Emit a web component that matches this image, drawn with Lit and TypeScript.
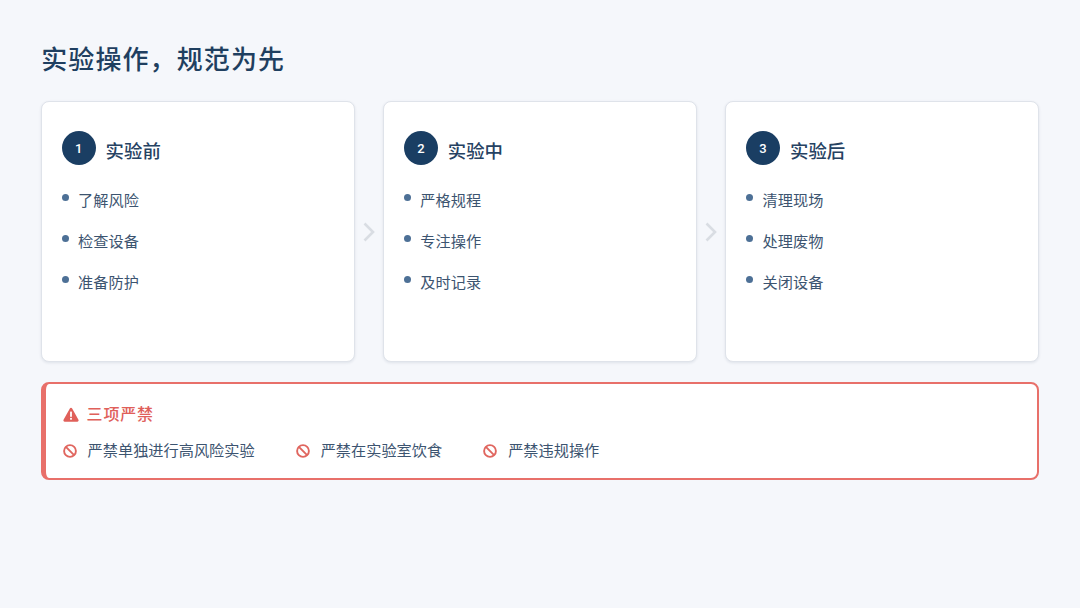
import { LitElement, html, css, svg } from "lit";
import { customElement } from "lit/decorators.js";

const cards = [
  { n: "1", title: "实验前", items: ["了解风险", "检查设备", "准备防护"] },
  { n: "2", title: "实验中", items: ["严格规程", "专注操作", "及时记录"] },
  { n: "3", title: "实验后", items: ["清理现场", "处理废物", "关闭设备"] },
];
const bans = ["严禁单独进行高风险实验", "严禁在实验室饮食", "严禁违规操作"];

const ban = svg`<circle cx="7" cy="7" r="5.9" fill="none" stroke="#e0665f" stroke-width="1.9"/><path d="M2.9 2.9 11.1 11.1" stroke="#e0665f" stroke-width="1.9"/>`;
const warn = svg`<path d="M8 .8c.5 0 .9.25 1.15.7l6.3 11.3c.5.9-.1 1.9-1.15 1.9H1.7c-1 0-1.65-1-1.15-1.9l6.3-11.3c.25-.45.65-.7 1.15-.7Z" fill="#e0605a"/><rect x="7.1" y="4.6" width="1.8" height="5.2" fill="#fff"/><rect x="7.1" y="10.9" width="1.8" height="1.8" fill="#fff"/>`;

@customElement("app-root")
export class AppRoot extends LitElement {
  static styles = css`
    :host {
      display: block;
      width: 1080px;
      height: 608px;
      box-sizing: border-box;
      padding: 41px 40.6px 0;
      background: #f5f7fb;
      font-family: "Roboto", "Noto Sans CJK SC", sans-serif;
      color: #2d4a6b;
    }
    h1 {
      margin: 0 0 22px;
      padding-left: 0.6px;
      font-size: 26px;
      line-height: 38px;
      font-weight: 500;
      letter-spacing: 1.1px;
      color: #1f3f60;
    }
    .row {
      display: flex;
      align-items: stretch;
    }
    .card {
      box-sizing: border-box;
      width: 314.4px;
      height: 261px;
      padding: 29px 20px 0;
      background: #fff;
      border: 1px solid #dfe3ea;
      border-radius: 8px;
      box-shadow: 0 1px 3px rgba(30, 50, 80, 0.1);
    }
    .head {
      display: flex;
      align-items: center;
      gap: 10px;
      margin-bottom: 23.5px;
    }
    .num {
      width: 34px;
      height: 34px;
      border-radius: 50%;
      background: #1a3e63;
      color: #fff;
      font-size: 13px;
      font-weight: 500;
      display: flex;
      align-items: center;
      justify-content: center;
    }
    .title {
      font-size: 18.4px;
      font-weight: 500;
      color: #264262;
      line-height: 34px;
      position: relative;
      top: 4px;
    }
    ul {
      margin: 0;
      padding: 0;
      list-style: none;
      display: flex;
      flex-direction: column;
      gap: 17.2px;
    }
    li {
      display: flex;
      gap: 9.5px;
      font-size: 15.2px;
      line-height: 24px;
      color: #3c5470;
    }
    .dot {
      width: 7px;
      height: 7px;
      margin-top: 5.5px;
      border-radius: 50%;
      background: #4d7096;
      flex: none;
    }
    .sep {
      width: 27.9px;
      display: flex;
      align-items: center;
      justify-content: center;
    }
    .alert {
      box-sizing: border-box;
      width: 998.8px;
      height: 98px;
      margin-top: 20px;
      padding: 19px 17px 0;
      background: #fff;
      border: 2px solid #e8706a;
      border-left-width: 5px;
      border-radius: 8px;
    }
    .alert-title {
      display: flex;
      align-items: center;
      gap: 8px;
      font-size: 16px;
      line-height: 24px;
      font-weight: 500;
      letter-spacing: 0.8px;
      color: #e0605a;
    }
    .bans {
      display: flex;
      gap: 41px;
      margin-top: 12px;
    }
    .ban {
      display: flex;
      align-items: center;
      gap: 11px;
      font-size: 15.2px;
      line-height: 24px;
      color: #3c5470;
    }
    svg { display: block; flex: none; }
  `;

  render() {
    const parts: unknown[] = [];
    cards.forEach((c, i) => {
      if (i) parts.push(html`<div class="sep"><svg width="14" height="22" viewBox="0 0 14 22"><path d="M2.5 2.5 11 11 2.5 19.5" fill="none" stroke="#d9dde3" stroke-width="2.6"/></svg></div>`);
      parts.push(html`<section class="card">
        <div class="head"><div class="num">${c.n}</div><div class="title">${c.title}</div></div>
        <ul>${c.items.map((t) => html`<li><span class="dot"></span><span>${t}</span></li>`)}</ul>
      </section>`);
    });
    return html`
      <h1>实验操作，规范为先</h1>
      <div class="row">${parts}</div>
      <div class="alert">
        <div class="alert-title"><svg width="16" height="16" viewBox="0 0 16 16">${warn}</svg>三项严禁</div>
        <div class="bans">${bans.map((b) => html`<div class="ban"><svg width="14" height="14" viewBox="0 0 14 14">${ban}</svg>${b}</div>`)}</div>
      </div>
    `;
  }
}
